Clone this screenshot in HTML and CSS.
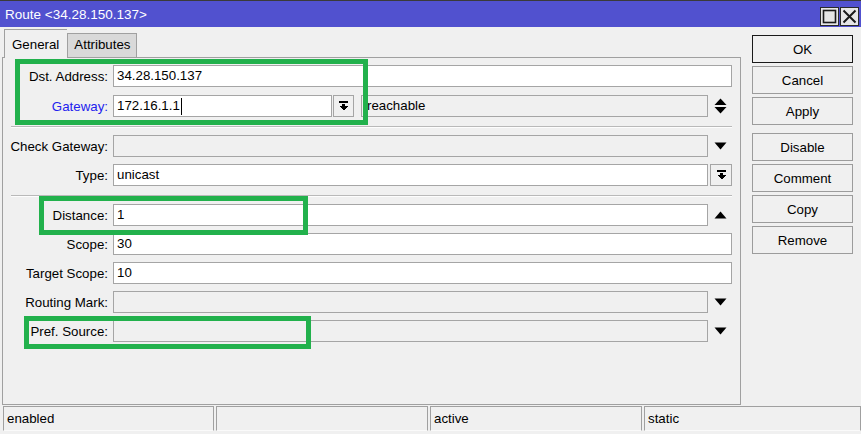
FILE: index.html
```html
<!DOCTYPE html>
<html lang="en">

<head>
    <meta charset="UTF-8">
    <title>Route</title>
    <link rel="stylesheet" href="styles.css">
</head>

<body>
    <div class="window">
        <div class="titlebar">
            <span class="title">Route &lt;34.28.150.137&gt;</span>
            <div class="title-btns">
                <span class="tbtn">
                    <svg width="17" height="17" viewBox="0 0 17 17"><rect x="2.5" y="2.5" width="12" height="12" fill="none" stroke="#1a1a1a" stroke-width="1.6"/></svg>
                </span>
                <span class="tbtn">
                    <svg width="17" height="17" viewBox="0 0 17 17"><path d="M2.5 2.5 L14.5 14.5 M14.5 2.5 L2.5 14.5" stroke="#1a1a1a" stroke-width="2"/></svg>
                </span>
            </div>
        </div>

        <div class="main">
            <div class="left">
                <div class="tabs">
                    <div class="tab active">General</div>
                    <div class="tab">Attributes</div>
                </div>
                <div class="panel">
                    <div class="row row-first">
                        <label class="lbl">Dst. Address:</label>
                        <div class="field">34.28.150.137</div>
                    </div>
                    <div class="row">
                        <label class="lbl lbl-link">Gateway:</label>
                        <div class="field gw-input">172.16.1.1<span class="caret"></span></div>
                        <span class="dd-btn">
                            <svg width="10" height="10" viewBox="0 0 10 10" shape-rendering="crispEdges"><rect x="0" y="0" width="9" height="2" fill="#000"/><rect x="3" y="3" width="3" height="3" fill="#000"/><path d="M0 5 L9 5 L4.5 9.5 Z" fill="#000"/></svg>
                        </span>
                        <div class="field field-off gw-state">reachable</div>
                        <span class="arrow">
                            <svg width="13" height="16" viewBox="0 0 13 16"><path d="M0.5 7 L12.5 7 L6.5 0.5 Z" fill="#000"/><path d="M0.5 9 L12.5 9 L6.5 15.5 Z" fill="#000"/></svg>
                        </span>
                    </div>

                    <div class="sep"></div>

                    <div class="row">
                        <label class="lbl">Check Gateway:</label>
                        <div class="field field-off"></div>
                        <span class="arrow">
                            <svg width="13" height="8" viewBox="0 0 13 8"><path d="M0.5 0.5 L12.5 0.5 L6.5 7.5 Z" fill="#000"/></svg>
                        </span>
                    </div>
                    <div class="row">
                        <label class="lbl">Type:</label>
                        <div class="field">unicast</div>
                        <span class="dd-btn dd-wide">
                            <svg width="10" height="10" viewBox="0 0 10 10" shape-rendering="crispEdges"><rect x="0" y="0" width="9" height="2" fill="#000"/><rect x="3" y="3" width="3" height="3" fill="#000"/><path d="M0 5 L9 5 L4.5 9.5 Z" fill="#000"/></svg>
                        </span>
                    </div>

                    <div class="sep"></div>

                    <div class="row">
                        <label class="lbl">Distance:</label>
                        <div class="field">1</div>
                        <span class="arrow">
                            <svg width="13" height="8" viewBox="0 0 13 8"><path d="M0.5 7.5 L12.5 7.5 L6.5 0.5 Z" fill="#000"/></svg>
                        </span>
                    </div>
                    <div class="row">
                        <label class="lbl">Scope:</label>
                        <div class="field">30</div>
                    </div>
                    <div class="row">
                        <label class="lbl">Target Scope:</label>
                        <div class="field">10</div>
                    </div>
                    <div class="row">
                        <label class="lbl">Routing Mark:</label>
                        <div class="field field-off"></div>
                        <span class="arrow">
                            <svg width="13" height="8" viewBox="0 0 13 8"><path d="M0.5 0.5 L12.5 0.5 L6.5 7.5 Z" fill="#000"/></svg>
                        </span>
                    </div>
                    <div class="row">
                        <label class="lbl">Pref. Source:</label>
                        <div class="field field-off"></div>
                        <span class="arrow">
                            <svg width="13" height="8" viewBox="0 0 13 8"><path d="M0.5 0.5 L12.5 0.5 L6.5 7.5 Z" fill="#000"/></svg>
                        </span>
                    </div>
                </div>
            </div>

            <div class="buttons">
                <button class="btn btn-default">OK</button>
                <button class="btn">Cancel</button>
                <button class="btn">Apply</button>
                <button class="btn btn-group">Disable</button>
                <button class="btn">Comment</button>
                <button class="btn">Copy</button>
                <button class="btn">Remove</button>
            </div>
        </div>

        <div class="statusbar">
            <div class="status">enabled</div>
            <div class="status"></div>
            <div class="status">active</div>
            <div class="status">static</div>
        </div>

        <!-- highlight boxes -->
        <div class="mark mark-gateway"></div>
        <div class="mark mark-distance"></div>
        <div class="mark mark-source"></div>
    </div>
</body>

</html>
```

FILE: styles.css
```css
* {
    box-sizing: border-box;
    margin: 0;
}

body {
    background-color: #f0f0f0;
    font-family: "Liberation Sans", Arial, sans-serif;
    font-size: 13.3px;
    color: #000;
}

.window {
    position: relative;
    width: 861px;
    height: 434px;
    background-color: #f0f0f0;
}

.titlebar {
    height: 27px;
    border-top: 1px solid #3a3a3a;
    background-color: #5151cf;
    display: flex;
    align-items: center;
    justify-content: space-between;
    padding: 0 2px 0 5px;
}

.title {
    color: #fff;
    font-size: 13.5px;
}

.title-btns {
    display: flex;
    gap: 1px;
    margin-top: 4px;
}

.tbtn {
    width: 19px;
    height: 19px;
    border: 1px solid #2a2a2a;
    background-color: #e6e6e6;
    display: flex;
    align-items: center;
    justify-content: center;
}

.main {
    height: 378px;
    display: flex;
    padding: 2px 8px 0 2px;
    gap: 11px;
}

.left {
    width: 739px;
    display: flex;
    flex-direction: column;
}

.tabs {
    display: flex;
    align-items: flex-end;
    height: 28px;
    padding-left: 2px;
    position: relative;
    z-index: 1;
}

.tab {
    height: 24px;
    padding: 0 6px;
    line-height: 22px;
    background-color: #d9d9d9;
    border: 1px solid #a0a0a0;
    border-bottom: none;
}

.tab.active {
    height: 29px;
    margin-bottom: -1px;
    padding: 0 8px 0 7px;
    line-height: 30px;
    background-color: #f0f0f0;
    border-right: none;
}

.panel {
    flex: 1;
    display: flex;
    flex-direction: column;
    border: 1px solid #a0a0a0;
    padding: 7px 8px 0 0;
}

.row {
    display: flex;
    align-items: center;
    flex: none;
    height: 22px;
    margin-bottom: 7px;
}

.row-first {
    margin-bottom: 8px;
}

.lbl {
    width: 105px;
    margin-right: 5px;
    text-align: right;
    white-space: nowrap;
}

.lbl-link {
    color: #2222ee;
}

.field {
    flex: 1;
    height: 22px;
    line-height: 20px;
    padding-left: 3px;
    background-color: #fff;
    border: 1px solid #a5a5a5;
    white-space: nowrap;
}

.field-off {
    background-color: #f0f0f0;
}

.gw-input {
    flex: none;
    width: 219px;
}

.caret {
    display: inline-block;
    width: 1px;
    height: 17px;
    margin-left: 1px;
    background-color: #000;
    vertical-align: middle;
}

.gw-state {
    margin-left: 7px;
    padding-left: 5px;
}

.dd-btn {
    width: 21px;
    height: 22px;
    margin-left: 1px;
    border: 1px solid #a5a5a5;
    background-color: #f0f0f0;
    display: flex;
    align-items: center;
    justify-content: center;
    padding-left: 1px;
}

.dd-wide {
    width: 22px;
    margin-left: 2px;
}

.arrow {
    width: 24px;
    display: flex;
    justify-content: center;
    align-items: center;
    padding-left: 1px;
}

.sep {
    flex: none;
    height: 2px;
    margin: 2px 0 7px 8px;
    border-top: 1px solid #b9b9b9;
    border-bottom: 1px solid #fdfdfd;
}

.buttons {
    display: flex;
    flex-direction: column;
    gap: 3px;
    padding-top: 6px;
}

.btn {
    width: 101px;
    height: 28px;
    font-family: "Liberation Sans", Arial, sans-serif;
    font-size: 13.3px;
    color: #000;
    background-color: #f0f0f0;
    border: 1px solid #9c9c9c;
    padding: 0;
}

.btn-default {
    border-color: #1a1a1a;
}

.btn-group {
    margin-top: 5px;
}

.statusbar {
    display: grid;
    grid-template-columns: 211px 212px 212px 217px;
    gap: 2px;
    padding: 1px 3px 0 3px;
}

.status {
    height: 25px;
    line-height: 24px;
    padding-left: 3px;
    border: 1px solid #a0a0a0;
    border-bottom-color: #fafafa;
}

.mark {
    position: absolute;
    border: 5px solid #22b14c;
}

.mark-gateway {
    left: 15px;
    top: 59px;
    width: 353px;
    height: 66px;
}

.mark-distance {
    left: 39px;
    top: 196px;
    width: 269px;
    height: 39px;
}

.mark-source {
    left: 24px;
    top: 316px;
    width: 287px;
    height: 33px;
}
```
